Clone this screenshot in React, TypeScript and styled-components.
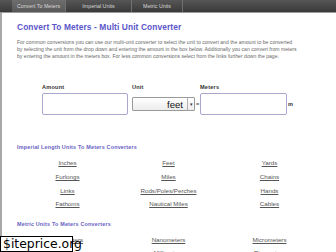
import React from "react";
import styled, { createGlobalStyle } from "styled-components";

const GlobalStyle = createGlobalStyle`
  html, body { margin: 0; padding: 0; background: #ffffff; }
  body { font-family: "Liberation Sans", Arial, sans-serif; overflow: hidden; }
`;

const Page = styled.div`
  width: 336px;
  height: 252px;
  position: relative;
  overflow: hidden;
  background: #fff;
`;

const Nav = styled.nav`
  height: 13px;
  display: flex;
  align-items: stretch;
  padding-left: 12px;
  background: linear-gradient(#565656, #3a3a3a);
  border-bottom: 1px solid #9a9a9a;
  box-sizing: border-box;
`;

const Tab = styled.div<{ $active?: boolean; $w: number }>`
  width: ${(p) => p.$w}px;
  display: flex;
  align-items: center;
  justify-content: center;
  font-size: 5.3px;
  color: #d8d8d8;
  border-right: 1px solid #707070;
  background: ${(p) => (p.$active ? "linear-gradient(#6e6e6e, #585858)" : "transparent")};
  white-space: nowrap;
`;

const Body = styled.div`
  border-left: 2px solid #a8a8a8;
  height: 239px;
  padding: 8px 0 0 15px;
  box-sizing: border-box;
`;

const Title = styled.h1`
  margin: 0;
  font-size: 8.4px;
  line-height: 12px;
  font-weight: bold;
  color: #5b55c9;
  letter-spacing: 0.1px;
`;

const Intro = styled.p`
  margin: 6px 0 0;
  font-size: 5.1px;
  line-height: 6.8px;
  color: #666;
  white-space: nowrap;
`;

const Form = styled.div`
  display: grid;
  grid-template-columns: 86px 4px 63px 5px 87px auto;
  grid-template-rows: 9px 22px;
  align-items: center;
  margin: 25px 0 0 25px;
`;

const Label = styled.div<{ $col: number }>`
  grid-column: ${(p) => p.$col};
  grid-row: 1;
  font-size: 5.6px;
  font-weight: bold;
  color: #333;
  letter-spacing: 0.2px;
  align-self: start;
`;

const Input = styled.div<{ $col: number }>`
  grid-column: ${(p) => p.$col};
  grid-row: 2;
  height: 22px;
  box-sizing: border-box;
  border: 1px solid #aaa7cf;
  border-radius: 2px;
  background: #fff;
`;

const Select = styled.div`
  grid-column: 3;
  grid-row: 2;
  height: 14px;
  box-sizing: border-box;
  border: 1px solid #9a9a9a;
  border-radius: 1px;
  background: linear-gradient(#ffffff, #ececec);
  display: flex;
  align-items: center;
  justify-content: flex-end;
`;

const SelectText = styled.span`
  font-size: 9.6px;
  color: #111;
  margin-right: 4px;
`;

const Arrow = styled.span`
  width: 6px;
  height: 12px;
  border-left: 1px solid #b0b0b0;
  display: flex;
  align-items: center;
  justify-content: center;
  font-size: 5px;
  color: #333;
`;

const Sym = styled.span<{ $col: number }>`
  grid-column: ${(p) => p.$col};
  grid-row: 2;
  font-size: 5.6px;
  font-weight: bold;
  color: #333;
  padding-left: 1px;
`;

const SectionHeading = styled.h2<{ $top: number }>`
  margin: ${(p) => p.$top}px 0 0;
  font-size: 5.4px;
  line-height: 8px;
  font-weight: bold;
  color: #6660c4;
  letter-spacing: 0.2px;
`;

const LinkGrid = styled.div`
  display: grid;
  grid-template-columns: 101px 101px 101px;
  grid-auto-rows: 13.6px;
  margin-top: 5px;
`;

const UnitLink = styled.a`
  font-size: 6.2px;
  color: #555;
  text-decoration: underline;
  text-align: center;
  line-height: 13.6px;
`;

const Badge = styled.div`
  position: absolute;
  left: 0;
  bottom: 0;
  width: 73px;
  height: 16px;
  box-sizing: border-box;
  border: 1px solid #000;
  background: #fff;
  font-family: "DejaVu Sans", sans-serif;
  font-size: 12.4px;
  line-height: 14px;
  color: #000;
  padding-left: 2px;
  white-space: nowrap;
`;

const imperial = [
  "Inches", "Feet", "Yards",
  "Furlongs", "Miles", "Chains",
  "Links", "Rods/Poles/Perches", "Hands",
  "Fathoms", "Nautical Miles", "Cables",
];

const metric = [
  "Decimeters", "Nanometers", "Micrometers",
  "Centimeters", "Millimeters", "Picometers",
];

export default function App() {
  return (
    <Page>
      <GlobalStyle />
      <Nav>
        <Tab $active $w={53}>Convert To Meters</Tab>
        <Tab $w={65}>Imperial Units</Tab>
        <Tab $w={50}>Metric Units</Tab>
      </Nav>
      <Body>
        <Title>Convert To Meters - Multi Unit Converter</Title>
        <Intro>
          For common conversions you can use our multi-unit converter to select the unit to convert and the amount to be converted
          <br />
          by selecting the unit from the drop down and entering the amount in the box below. Additionally you can convert from meters
          <br />
          by entering the amount in the meters box. For less common conversions select from the links further down the page.
        </Intro>
        <Form>
          <Label $col={1}>Amount</Label>
          <Label $col={3}>Unit</Label>
          <Label $col={5}>Meters</Label>
          <Input $col={1} />
          <Select>
            <SelectText>feet</SelectText>
            <Arrow>▾</Arrow>
          </Select>
          <Sym $col={4}>=</Sym>
          <Input $col={5} />
          <Sym $col={6}>m</Sym>
        </Form>
        <SectionHeading $top={28}>Imperial Length Units To Meters Converters</SectionHeading>
        <LinkGrid>
          {imperial.map((u) => (
            <UnitLink key={u} href="#">{u}</UnitLink>
          ))}
        </LinkGrid>
        <SectionHeading $top={9}>Metric Units To Meters Converters</SectionHeading>
        <LinkGrid>
          {metric.map((u) => (
            <UnitLink key={u} href="#">{u}</UnitLink>
          ))}
        </LinkGrid>
      </Body>
      <Badge>$iteprice.org</Badge>
    </Page>
  );
}
